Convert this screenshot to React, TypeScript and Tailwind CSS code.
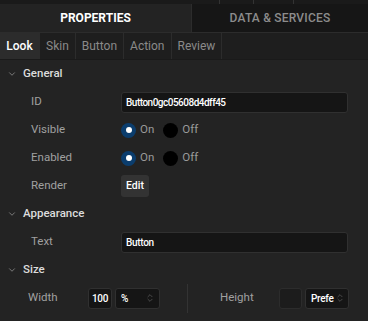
import { ChevronDown, ChevronsUpDown } from 'lucide-react';

const font = { fontFamily: 'Roboto, "Liberation Sans", sans-serif' };

function Radio({ on, label }: { on: boolean; label: string }) {
  return (
    <div className="flex items-center gap-[4px]">
      {on ? (
        <span className="flex h-[15px] w-[15px] items-center justify-center rounded-full bg-[#0b3d6d]">
          <span className="h-[6px] w-[6px] rounded-full bg-white" />
        </span>
      ) : (
        <span className="h-[15px] w-[15px] rounded-full bg-black" />
      )}
      <span className="text-[11.5px] text-[#9a9a9a]">{label}</span>
    </div>
  );
}

function Section({ title }: { title: string }) {
  return (
    <div className="flex h-[28px] items-center pl-[7px]">
      <ChevronDown className="h-[10px] w-[10px] text-[#8a8a8a]" strokeWidth={2} />
      <span className="ml-[6px] text-[11.5px] font-medium text-[#dcdcdc]">{title}</span>
    </div>
  );
}

function Row({ label, children }: { label: string; children?: React.ReactNode }) {
  return (
    <div className="flex h-[28px] items-center">
      <span className="w-[121px] pl-[31px] text-[11.5px] text-[#a0a0a0]">{label}</span>
      <div className="flex flex-1 items-center pr-[20px]">{children}</div>
    </div>
  );
}

export default function App() {
  const subTabs = ['Look', 'Skin', 'Button', 'Action', 'Review'];

  return (
    <div className="h-[321px] w-[368px] overflow-hidden bg-[#232323]" style={font}>
      {/* top strip */}
      <div className="flex h-[4px] bg-[#1a1a1a]">
        <div className="w-[219px]" />
        <div className="w-[34px] border-l border-[#333]" />
        <div className="w-[40px] border-l border-[#333]" />
        <div className="flex-1 border-l border-[#333]" />
      </div>

      {/* main tabs */}
      <div className="flex h-[29px] border-b border-[#2c2c2c]">
        <div className="flex w-[191px] items-center justify-center bg-[#232323] text-[12px] font-bold text-white">
          PROPERTIES
        </div>
        <div className="flex flex-1 items-center justify-center border-l border-[#2c2c2c] bg-[#161616] text-[12px] font-medium tracking-[0.2px] text-[#8c8c8c]">
          DATA &amp; SERVICES
        </div>
      </div>

      {/* sub tabs */}
      <div className="flex h-[27px] border-b border-[#1a1a1a] bg-[#1e1e1e]">
        {subTabs.map((t, i) => (
          <div
            key={t}
            className={
              i === 0
                ? 'flex w-[39px] items-center justify-center bg-[#2c2c2c] text-[12px] font-medium text-white'
                : 'flex items-center border-l border-[#2c2c2c] px-[6px] text-[12px] text-[#8a8a8a]'
            }
          >
            {t}
          </div>
        ))}
        <div className="flex-1 border-l border-[#2c2c2c]" />
      </div>

      {/* General */}
      <Section title="General" />
      <Row label="ID">
        <div className="flex h-[21px] flex-1 items-center rounded-[3px] border border-[#303030] bg-[#151515] px-[4px] text-[10px] font-medium tracking-[-0.5px] text-white">
          Button0gc05608d4dff45
        </div>
      </Row>
      <Row label="Visible">
        <div className="flex gap-[9px]">
          <Radio on label="On" />
          <Radio on={false} label="Off" />
        </div>
      </Row>
      <Row label="Enabled">
        <div className="flex gap-[9px]">
          <Radio on label="On" />
          <Radio on={false} label="Off" />
        </div>
      </Row>
      <Row label="Render">
        <button className="flex h-[22px] w-[28px] items-center justify-center rounded-[3px] bg-[#333333] text-[10.5px] font-medium text-white">
          Edit
        </button>
      </Row>

      {/* Appearance */}
      <Section title="Appearance" />
      <Row label="Text">
        <div className="flex h-[21px] flex-1 items-center rounded-[3px] border border-[#303030] bg-[#151515] px-[4px] text-[10px] font-medium tracking-[-0.3px] text-white">
          Button
        </div>
      </Row>

      {/* Size */}
      <Section title="Size" />
      <div className="flex h-[28px] items-center">
        <span className="w-[88px] pl-[28px] text-[11.5px] text-[#a0a0a0]">Width</span>
        <div className="flex h-[21px] w-[24px] items-center justify-center rounded-[3px] border border-[#303030] bg-[#151515] text-[10px] font-medium tracking-[-0.3px] text-white">
          100
        </div>
        <div className="ml-[3px] flex h-[21px] w-[45px] items-center justify-between rounded-[3px] border border-[#303030] bg-[#151515] pl-[5px] pr-[4px] text-[10px] font-medium text-white">
          %
          <ChevronsUpDown className="h-[10px] w-[10px] text-[#666]" strokeWidth={1.5} />
        </div>
        <div className="ml-[27px] h-[29px] w-px bg-[#333]" />
        <span className="ml-[32px] w-[59px] text-[11.5px] text-[#a0a0a0]">Height</span>
        <div className="h-[21px] w-[23px] rounded-[3px] border border-[#2c2c2c] bg-[#1c1c1c]" />
        <div className="ml-[3px] flex h-[21px] w-[44px] items-center justify-between rounded-[3px] border border-[#303030] bg-[#151515] pl-[5px] pr-[3px] text-[10px] font-medium tracking-[-0.3px] text-white">
          <span>Prefe</span>
          <ChevronsUpDown className="h-[10px] w-[10px] shrink-0 text-[#666]" strokeWidth={1.5} />
        </div>
      </div>
    </div>
  );
}
